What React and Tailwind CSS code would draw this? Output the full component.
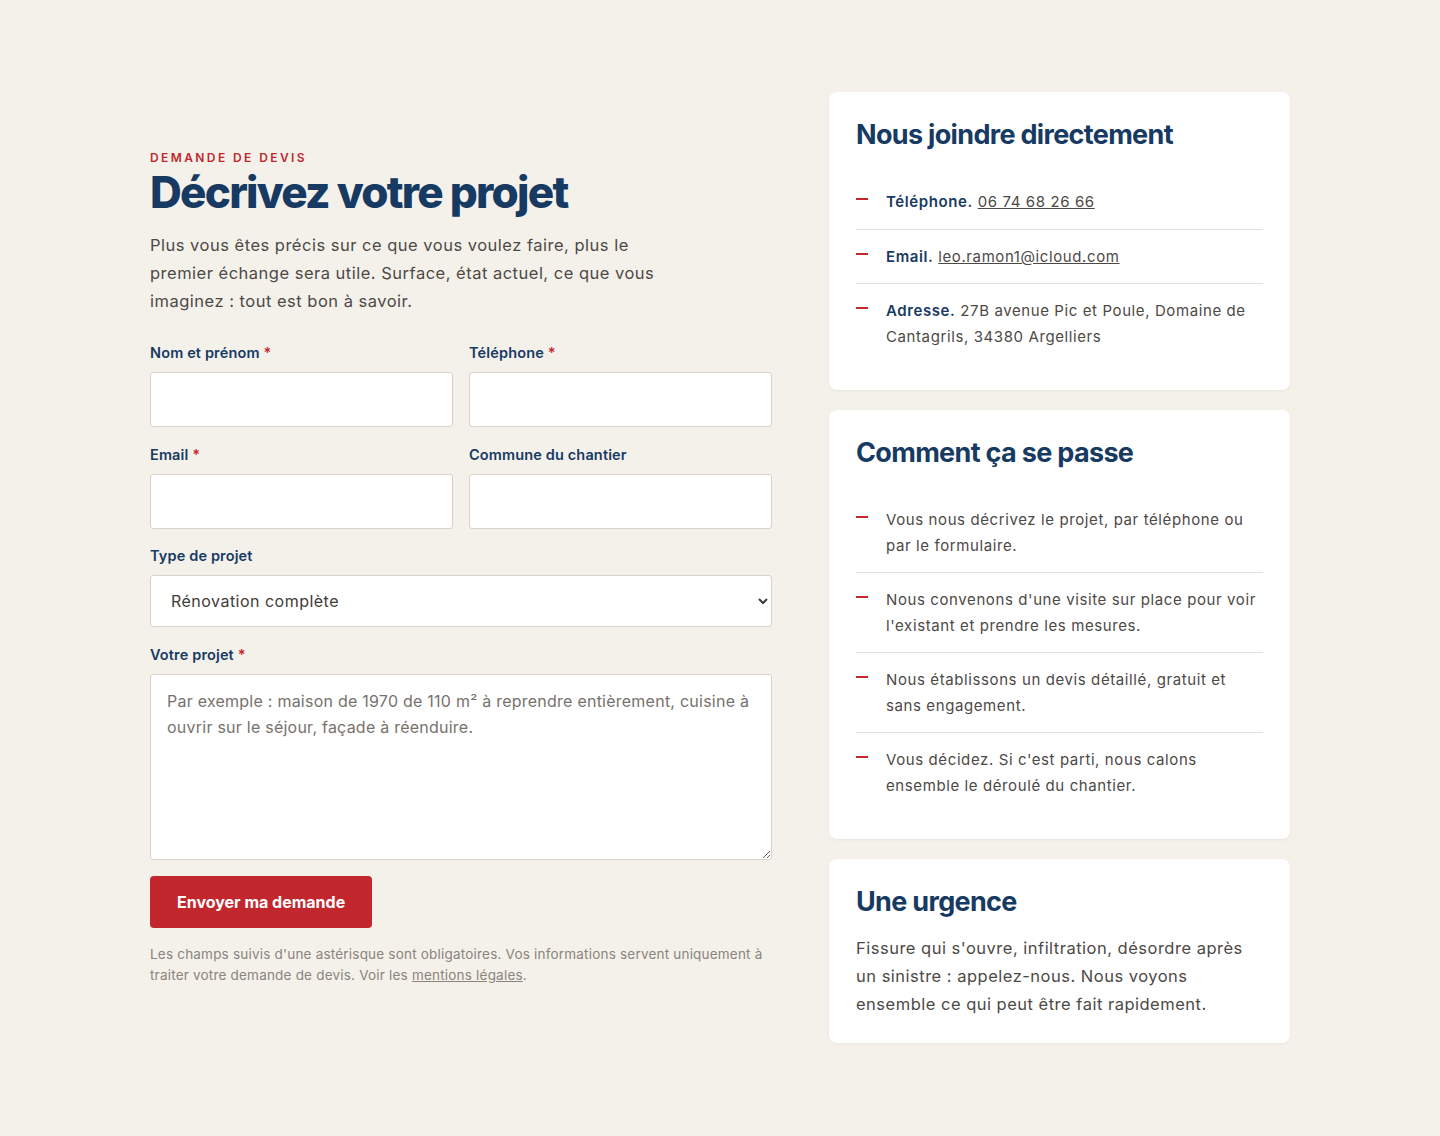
import React from "react";

const navy = "text-[#173a63]";

const contactItems = [
  { label: "Téléphone.", value: "06 74 68 26 66", link: true },
  { label: "Email.", value: "leo.ramon1@icloud.com", link: true },
  { label: "Adresse.", value: "27B avenue Pic et Poule, Domaine de Cantagrils, 34380 Argelliers" },
];

const steps = [
  "Vous nous décrivez le projet, par téléphone ou par le formulaire.",
  "Nous convenons d'une visite sur place pour voir l'existant et prendre les mesures.",
  "Nous établissons un devis détaillé, gratuit et sans engagement.",
  "Vous décidez. Si c'est parti, nous calons ensemble le déroulé du chantier.",
];

const Field = ({ label, required, children }) => (
  <div className="flex flex-col">
    <label className={`text-[14.5px] font-semibold leading-5 tracking-[0.01em] mb-[9px] ${navy}`}>
      {label}
      {required && <span className="text-[#c1272d]"> *</span>}
    </label>
    {children}
  </div>
);

const inputCls =
  "h-[55px] w-full bg-white border border-[#d6d3cd] rounded-[3px] px-4 text-[16px] outline-none";

const Card = ({ title, children, tight }) => (
  <div
    className={`bg-white rounded-[8px] px-[27px] pt-[27px] shadow-[0_1px_3px_rgba(0,0,0,0.05)] ${
      tight ? "pb-[25px]" : "pb-[27px]"
    }`}
  >
    <h3
      className={`text-[27px] leading-[31px] font-bold tracking-[-0.025em] ${navy} ${
        tight ? "mb-[17px]" : "mb-[25px]"
      }`}
    >
      {title}
    </h3>
    {children}
  </div>
);

const Item = ({ children, last }) => (
  <li
    className={`grid grid-cols-[12px_1fr] gap-[18px] py-[14px] ${
      last ? "" : "border-b border-[#e2dfda]"
    }`}
  >
    <span className="mt-[9px] h-[2px] w-[12px] bg-[#c1272d]" />
    <div className="text-[15px] leading-[25.5px] tracking-[0.04em] text-[#4d4945]">{children}</div>
  </li>
);

export default function App() {
  return (
    <div
      className="min-h-[1136px] bg-[#f4f1eb] py-[92px]"
      style={{ fontFamily: "Inter, 'Noto Sans', sans-serif" }}
    >
      <div className="mx-auto w-[1140px] grid grid-cols-[622px_461px] justify-between items-center">
        {/* formulaire */}
        <div>
          <p className="text-[12px] font-semibold tracking-[0.2em] text-[#c1272d] leading-4">
            DEMANDE DE DEVIS
          </p>
          <h1 className={`text-[44px] leading-[52px] font-extrabold tracking-[-0.04em] ${navy}`}>
            Décrivez votre projet
          </h1>
          <p className="mt-[13px] max-w-[520px] text-[16.5px] leading-[28px] tracking-[0.03em] text-[#4d4945]">
            Plus vous êtes précis sur ce que vous voulez faire, plus le premier échange sera
            utile. Surface, état actuel, ce que vous imaginez : tout est bon à savoir.
          </p>

          <form className="mt-[28px]" onSubmit={(e) => e.preventDefault()}>
            <div className="grid grid-cols-2 gap-x-4 gap-y-[18px]">
              <Field label="Nom et prénom" required>
                <input type="text" className={inputCls} />
              </Field>
              <Field label="Téléphone" required>
                <input type="tel" className={inputCls} />
              </Field>
              <Field label="Email" required>
                <input type="email" className={inputCls} />
              </Field>
              <Field label="Commune du chantier">
                <input type="text" className={inputCls} />
              </Field>
            </div>

            <div className="mt-[17px]">
              <Field label="Type de projet">
                <select className="h-[52px] w-full bg-white border border-[#d6d3cd] rounded-[3px] px-[16px] text-[16px] tracking-[0.03em] text-[#3f3b37]">
                  <option>Rénovation complète</option>
                  <option>Extension</option>
                  <option>Maçonnerie</option>
                </select>
              </Field>
            </div>

            <div className="mt-[18px]">
              <Field label="Votre projet" required>
                <textarea
                  className="h-[186px] w-full bg-white border border-[#d6d3cd] rounded-[3px] px-4 py-[13px] text-[16px] leading-[26px] tracking-[0.015em] placeholder:text-[#77726c] outline-none"
                  placeholder="Par exemple : maison de 1970 de 110 m² à reprendre entièrement, cuisine à ouvrir sur le séjour, façade à réenduire."
                />
              </Field>
            </div>

            <button
              type="submit"
              className="mt-[16px] h-[52px] px-[27px] rounded-[4px] bg-[#c1272d] text-white text-[16px] font-bold"
            >
              Envoyer ma demande
            </button>

            <p className="mt-[16px] text-[13.5px] leading-[21px] tracking-[0.015em] text-[#8a847d]">
              Les champs suivis d'une astérisque sont obligatoires. Vos informations servent
              uniquement à traiter votre demande de devis. Voir les{" "}
              <a href="#" className="underline">
                mentions légales
              </a>
              .
            </p>
          </form>
        </div>

        {/* colonne de droite */}
        <div className="flex flex-col gap-[20px]">
          <Card title="Nous joindre directement">
            <ul>
              {contactItems.map((it, i) => (
                <Item key={it.label} last={i === contactItems.length - 1}>
                  <strong className={`font-semibold ${navy}`}>{it.label}</strong>{" "}
                  {it.link ? (
                    <a href="#" className="underline">
                      {it.value}
                    </a>
                  ) : (
                    it.value
                  )}
                </Item>
              ))}
            </ul>
          </Card>

          <Card title="Comment ça se passe">
            <ul>
              {steps.map((s, i) => (
                <Item key={i} last={i === steps.length - 1}>
                  {s}
                </Item>
              ))}
            </ul>
          </Card>

          <Card title="Une urgence" tight>
            <p className="text-[16.5px] leading-[28px] tracking-[0.03em] text-[#4d4945]">
              Fissure qui s'ouvre, infiltration, désordre après un sinistre : appelez-nous. Nous
              voyons ensemble ce qui peut être fait rapidement.
            </p>
          </Card>
        </div>
      </div>
    </div>
  );
}
